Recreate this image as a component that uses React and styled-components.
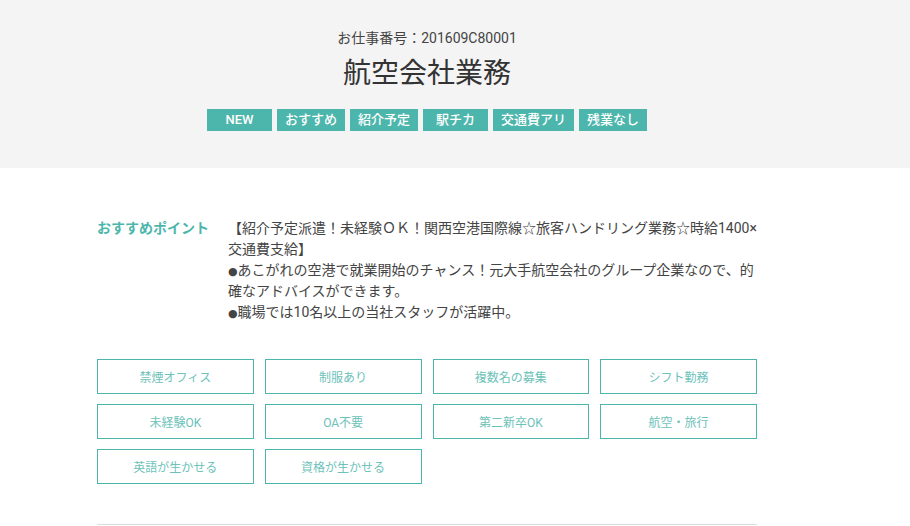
import styled, { createGlobalStyle } from "styled-components";

const teal = "#4db6ac";

const GlobalStyle = createGlobalStyle`
  * { box-sizing: border-box; }
  body {
    margin: 0;
    background: #fff;
    font-family: "Roboto", "Noto Sans CJK JP", sans-serif;
    color: #333;
  }
`;

const tags = ["NEW", "おすすめ", "紹介予定", "駅チカ", "交通費アリ", "残業なし"];

const features = [
  "禁煙オフィス",
  "制服あり",
  "複数名の募集",
  "シフト勤務",
  "未経験OK",
  "OA不要",
  "第二新卒OK",
  "航空・旅行",
  "英語が生かせる",
  "資格が生かせる",
];

const App = () => {
  return (
    <>
      <GlobalStyle />
      <Header>
        <Inner>
          <JobNo>お仕事番号：201609C80001</JobNo>
          <Title>航空会社業務</Title>
          <TagList>
            {tags.map((t) => (
              <Tag key={t}>{t}</Tag>
            ))}
          </TagList>
        </Inner>
      </Header>
      <Main>
        <Inner>
          <Point>
            <PointLabel>おすすめポイント</PointLabel>
            <PointText>
              【紹介予定派遣！未経験ＯＫ！関西空港国際線☆旅客ハンドリング業務☆時給1400×交通費支給】
              <br />
              <Dot>●</Dot>あこがれの空港で就業開始のチャンス！元大手航空会社のグループ企業なので、的確なアドバイスができます。
              <br />
              <Dot>●</Dot>職場では10名以上の当社スタッフが活躍中。
            </PointText>
          </Point>
          <FeatureGrid>
            {features.map((f) => (
              <Feature key={f}>{f}</Feature>
            ))}
          </FeatureGrid>
          <Divider />
        </Inner>
      </Main>
    </>
  );
};

const Header = styled.header`
  background: #f4f4f4;
  padding: 28px 0 37px;
`;

const Inner = styled.div`
  width: 660px;
  margin-left: 97px;
`;

const JobNo = styled.p`
  margin: 0;
  text-align: center;
  font-size: 14px;
  line-height: 20px;
  color: #444;
`;

const Title = styled.h1`
  margin: 8px 0 0;
  text-align: center;
  font-size: 28px;
  line-height: 36px;
  font-weight: normal;
  color: #333;
`;

const TagList = styled.ul`
  list-style: none;
  margin: 17px 0 0;
  padding: 0;
  display: flex;
  justify-content: center;
  gap: 5px;
`;

const Tag = styled.li`
  min-width: 65px;
  height: 22px;
  padding: 0 8px;
  background: ${teal};
  color: #fff;
  font-size: 13px;
  font-weight: 500;
  line-height: 22px;
  text-align: center;
`;

const Main = styled.main`
  padding-top: 50px;
`;

const Point = styled.section`
  display: flex;
`;

const PointLabel = styled.h2`
  width: 131px;
  flex-shrink: 0;
  margin: 0;
  font-size: 14px;
  line-height: 21px;
  font-weight: bold;
  color: ${teal};
`;

const PointText = styled.p`
  flex: 1;
  margin: 0;
  font-size: 14px;
  line-height: 21px;
  color: #444;
`;

const Dot = styled.span`
  font-family: "DejaVu Sans", sans-serif;
  font-size: 11px;
  line-height: 1;
`;

const FeatureGrid = styled.ul`
  list-style: none;
  margin: 36px 0 0;
  padding: 0;
  display: grid;
  grid-template-columns: repeat(4, 1fr);
  gap: 10px 11px;
`;

const Feature = styled.li`
  height: 35px;
  border: 1px solid ${teal};
  display: flex;
  align-items: center;
  justify-content: center;
  font-size: 12px;
  color: #6cc2b9;
`;

const Divider = styled.hr`
  margin: 40px 0 0;
  border: 0;
  border-top: 1px solid #ddd;
`;

export default App;
